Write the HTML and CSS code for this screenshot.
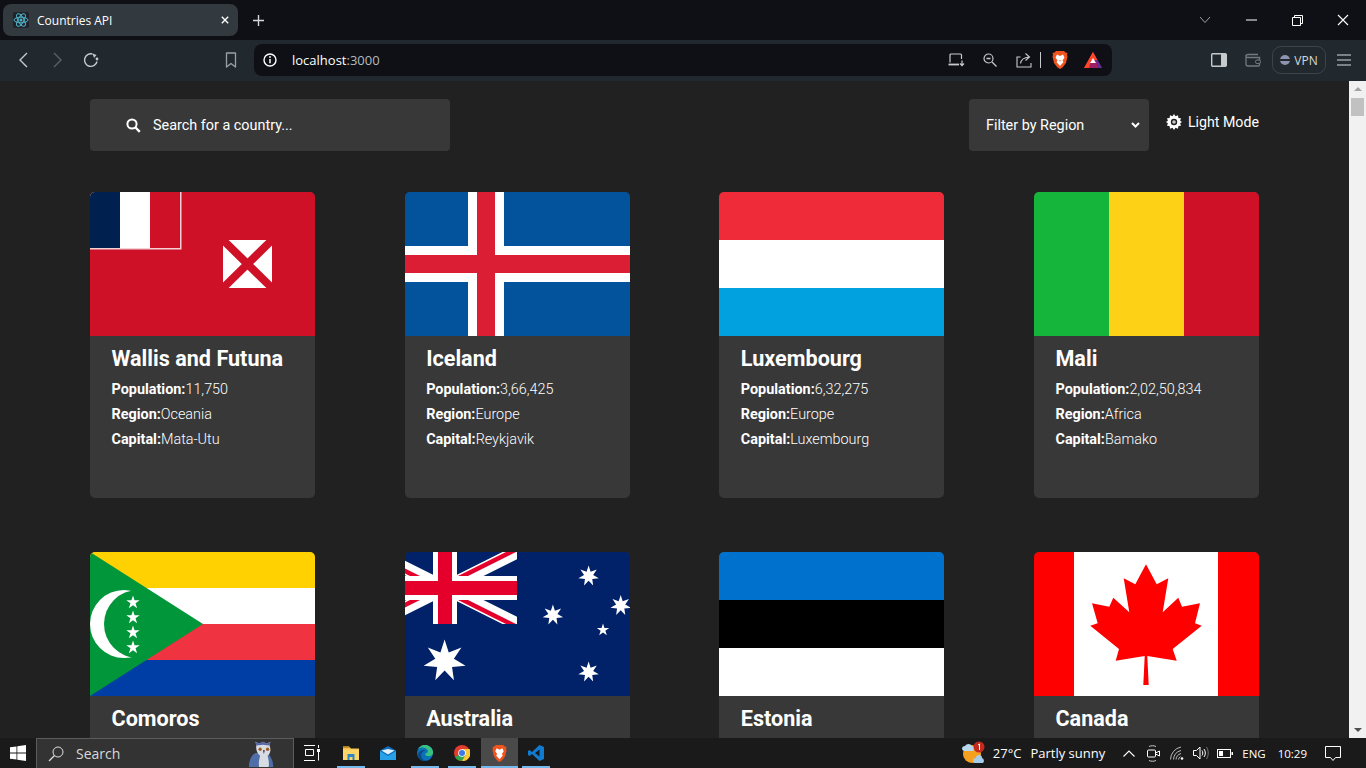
FILE: index.html
```html
<!DOCTYPE html>
<html lang="en">
  <head>
    <meta charset="UTF-8" />
    <meta name="viewport" content="width=device-width, initial-scale=1.0" />
    <title>Countries API</title>
    <link rel="stylesheet" href="styles.css">
  </head>
  <body>
    <!-- stars used by the comoros and australia flags -->
    <svg class="defs" width="0" height="0">
      <defs>
        <path id="star5" d="M0-1L.225-.309H.951L.363.118.588.809 0 .382-.588.809-.363.118-.951-.309H-.225z" fill="#fff"/>
        <path id="star7" d="M0-1L.193-.4.782-.623.433-.099.975.223.347.277.434.901 0 .444-.434.901-.347.277-.975.223-.433-.099-.782-.623-.193-.4z" fill="#fff"/>
        <clipPath id="canton"><rect width="112" height="72"/></clipPath>
      </defs>
    </svg>

    <!-- browser chrome -->
    <div class="tabstrip">
      <div class="tab">
        <svg class="favicon" viewBox="0 0 16 16">
          <rect width="16" height="16" rx="2" fill="#20232a"/>
          <g fill="none" stroke="#4fb3c8" stroke-width="1">
            <ellipse cx="8" cy="8" rx="7" ry="2.8"/>
            <ellipse cx="8" cy="8" rx="7" ry="2.8" transform="rotate(60 8 8)"/>
            <ellipse cx="8" cy="8" rx="7" ry="2.8" transform="rotate(120 8 8)"/>
          </g>
          <circle cx="8" cy="8" r="1.5" fill="#4fb3c8"/>
        </svg>
        <span class="tabTitle">Countries API</span>
        <svg class="tabClose" viewBox="0 0 10 10"><path d="M1 1l8 8M9 1l-8 8" stroke="#fff" stroke-width="1.7" fill="none"/></svg>
      </div>
      <svg class="newTab" viewBox="0 0 12 12"><path d="M6 0v12M0 6h12" stroke="#d5d8da" stroke-width="1.5" fill="none"/></svg>
      <div class="winControls">
        <span class="winBtn"><svg width="12" height="8" viewBox="0 0 12 8"><path d="M1 1l5 5.500L11 1" stroke="#9aa0a6" fill="none"/></svg></span>
        <span class="winBtn"><svg width="11" height="2" viewBox="0 0 11 2"><path d="M0 1h11" stroke="#fff" fill="none"/></svg></span>
        <span class="winBtn"><svg width="11" height="11" viewBox="0 0 11 11"><path d="M.5 2.500h8v8h-8zM2.500 2.500v-2h8v8h-2" stroke="#fff" fill="none"/></svg></span>
        <span class="winBtn"><svg width="12" height="12" viewBox="0 0 12 12"><path d="M1 1l10 10M11 1L1 11" stroke="#fff" stroke-width="1.100" fill="none"/></svg></span>
      </div>
    </div>

    <div class="toolbar">
      <span class="navBtn"><svg width="9" height="16" viewBox="0 0 9 16"><path d="M8 1L1 8l7 7" stroke="#c6cacd" stroke-width="1.400" fill="none"/></svg></span>
      <span class="navBtn"><svg width="9" height="16" viewBox="0 0 9 16"><path d="M1 1l7 7-7 7" stroke="#5b6166" stroke-width="1.400" fill="none"/></svg></span>
      <span class="navBtn"><svg width="16" height="16" viewBox="0 0 16 16"><path d="M14 9.500A6.300 6.300 0 1 1 9.500 2" stroke="#c6cacd" stroke-width="1.400" fill="none"/><path d="M9.500 1.500l4 1.500-2.500 3" fill="#c6cacd"/><circle cx="14" cy="7" r="1.400" fill="#c6cacd"/></svg></span>
      <span class="navBtn bookmark"><svg width="12" height="16" viewBox="0 0 12 16"><path d="M1.500 1h9v14L6 11.500 1.500 15z" stroke="#9aa0a6" stroke-width="1.300" fill="none" stroke-linejoin="round"/></svg></span>
      <div class="urlBar">
        <svg class="urlInfo" width="14" height="14" viewBox="0 0 14 14"><circle cx="7" cy="7" r="6" stroke="#fff" stroke-width="1.400" fill="none"/><path d="M7 6v4.200" stroke="#fff" stroke-width="1.500"/><circle cx="7" cy="4" r=".9" fill="#fff"/></svg>
        <span class="urlText">localhost<span class="urlPort">:3000</span></span>
        <div class="urlActions">
          <span class="urlBtn"><svg width="17" height="14" viewBox="0 0 17 14"><path d="M2 9.500V2a1 1 0 0 1 1-1h9.500a1 1 0 0 1 1 1v4" stroke="#c6cacd" stroke-width="1.200" fill="none"/><path d="M.5 11.500h10.500" stroke="#c6cacd" stroke-width="1.800" fill="none"/><path d="M14 7.500v5M12 10.500l2 2.200 2-2.200" stroke="#c6cacd" stroke-width="1.200" fill="none"/></svg></span>
          <span class="urlBtn"><svg width="14" height="14" viewBox="0 0 14 14"><circle cx="5.500" cy="5.500" r="4.500" stroke="#c6cacd" stroke-width="1.200" fill="none"/><path d="M3.500 5.500h4M9 9l4.500 4.500" stroke="#c6cacd" stroke-width="1.300" fill="none"/></svg></span>
          <span class="urlBtn"><svg width="16" height="16" viewBox="0 0 16 16"><path d="M4.500 5H1v10h14v-4" stroke="#c6cacd" stroke-width="1.100" fill="none"/><path d="M4.500 11.500c.5-4 3.500-6 8.500-6.500M9.500 1.500L13.500 5l-4 3.500" stroke="#c6cacd" stroke-width="1.100" fill="none"/></svg></span>
          <span class="urlSep"></span>
          <span class="urlBtn braveBtn"><svg width="16" height="18" viewBox="0 0 16 18"><path d="M4 0h8l1.500 1.500 2 .5-.5 2 .5 1.500L14 12l-3.500 4.500L8 18l-2.500-1.500L2 12 .5 5.500 1 4 .5 2l2-.5z" fill="#f1531f"/><path d="M8 5L5 3.500 3.500 6.500l2 3L4.500 11 8 15l3.500-4-1-1.500 2-3L11 3.500z" fill="#fff"/><path d="M8 10.500l-1.500-1h3z" fill="#f1531f"/></svg></span>
          <span class="urlBtn"><svg width="18" height="16" viewBox="0 0 18 16"><path d="M9 0l9 16H0z" fill="#9e1f63"/><path d="M9 0L0 16h5z" fill="#ff4724"/><path d="M9 0l9 16h-4z" fill="#662d91"/><path d="M9 0L4.800 8h8.400z" fill="#ff4724"/><path d="M9 6l3 5H6z" fill="#fff"/></svg></span>
        </div>
      </div>
      <div class="toolRight">
        <span class="navBtn"><svg width="16" height="14" viewBox="0 0 16 14"><rect x=".7" y=".7" width="14.600" height="12.600" rx="1" stroke="#c6cacd" stroke-width="1.400" fill="none"/><rect x="10" y="1" width="5" height="12" fill="#c6cacd"/></svg></span>
        <span class="navBtn"><svg width="16" height="14" viewBox="0 0 16 14"><path d="M1 3.500A2 2 0 0 1 3 1.500h10M1 3.500V11a2 2 0 0 0 2 2h10.500a1 1 0 0 0 1-1V4.500H3A2 2 0 0 1 1 3.500z" stroke="#727a80" stroke-width="1.300" fill="none"/><rect x="10.500" y="7" width="5" height="3.500" rx="1.500" stroke="#727a80" fill="#22292e"/></svg></span>
        <span class="vpn"><span class="vpnDot"></span>VPN</span>
        <span class="navBtn menuBtn"><svg width="14" height="12" viewBox="0 0 14 12"><path d="M0 1h14M0 6h14M0 11h14" stroke="#9aa0a6" stroke-width="1.300" fill="none"/></svg></span>
      </div>
    </div>

    <div class="viewport">
      <div class="page">
        <div class="header">
          <div class="search">
            <svg width="15" height="15" viewBox="0 0 15 15"><circle cx="6" cy="6" r="4.600" stroke="#fff" stroke-width="2" fill="none"/><path d="M9.500 9.500l4.300 4.300" stroke="#fff" stroke-width="2.400" fill="none"/></svg>
            <span>Search for a country...</span>
          </div>
          <div class="filter">
            <span>Filter by Region</span>
            <svg width="9" height="6" viewBox="0 0 9 6"><path d="M1 1l3.500 3.500L8 1" stroke="#fff" stroke-width="2" fill="none"/></svg>
          </div>
          <div class="themeToggle">
            <svg width="16" height="16" viewBox="0 0 16 16"><path d="M8 0l1.500 2.200L12 1.300l.4 2.600 2.600.4-.9 2.500L16 8l-1.900 1.200.9 2.500-2.600.4-.4 2.600-2.500-.9L8 16l-1.500-2.200-2.500.9-.4-2.600-2.600-.4.9-2.500L0 8l1.900-1.200L1 4.300l2.600-.4.400-2.600 2.500.9z" fill="#fff"/><circle cx="8" cy="8" r="3.200" fill="#212121"/><circle cx="8" cy="8" r="1.800" fill="#c8c8c8"/></svg>
            <span>Light Mode</span>
          </div>
        </div>

        <div class="countries">
          <div class="card">
            <svg class="flag" viewBox="0 0 225 144">
              <rect width="225" height="144" fill="#ce1126"/>
              <rect width="91.500" height="57.500" fill="#f5d0d5"/>
              <rect width="30" height="56" fill="#00214f"/>
              <rect x="30" width="30" height="56" fill="#fff"/>
              <rect x="60" width="30" height="56" fill="#ce1126"/>
              <rect x="133" y="48" width="49" height="48" fill="#fff"/>
              <path d="M133 48l49 48M182 48l-49 48" stroke="#ce1126" stroke-width="8" fill="none"/>
            </svg>
            <div class="cardBody">
              <h2>Wallis and Futuna</h2>
              <p><b>Population:</b>11,750</p>
              <p><b>Region:</b>Oceania</p>
              <p><b>Capital:</b>Mata-Utu</p>
            </div>
          </div>

          <div class="card">
            <svg class="flag" viewBox="0 0 225 144">
              <rect width="225" height="144" fill="#02529c"/>
              <path d="M63 0h36v54h126v36H99v54H63V90H0V54h63z" fill="#fff"/>
              <path d="M72 0h18v63h135v18H90v63H72V81H0V63h72z" fill="#dc1e35"/>
            </svg>
            <div class="cardBody">
              <h2>Iceland</h2>
              <p><b>Population:</b>3,66,425</p>
              <p><b>Region:</b>Europe</p>
              <p><b>Capital:</b>Reykjavik</p>
            </div>
          </div>

          <div class="card">
            <svg class="flag" viewBox="0 0 225 144">
              <rect width="225" height="48" fill="#ef2b3a"/>
              <rect y="48" width="225" height="48" fill="#fff"/>
              <rect y="96" width="225" height="48" fill="#00a1de"/>
            </svg>
            <div class="cardBody">
              <h2>Luxembourg</h2>
              <p><b>Population:</b>6,32,275</p>
              <p><b>Region:</b>Europe</p>
              <p><b>Capital:</b>Luxembourg</p>
            </div>
          </div>

          <div class="card">
            <svg class="flag" viewBox="0 0 225 144">
              <rect width="75" height="144" fill="#14b53a"/>
              <rect x="75" width="75" height="144" fill="#fcd116"/>
              <rect x="150" width="75" height="144" fill="#ce1126"/>
            </svg>
            <div class="cardBody">
              <h2>Mali</h2>
              <p><b>Population:</b>2,02,50,834</p>
              <p><b>Region:</b>Africa</p>
              <p><b>Capital:</b>Bamako</p>
            </div>
          </div>

          <div class="card">
            <svg class="flag" viewBox="0 0 225 144">
              <rect width="225" height="36" fill="#ffd100"/>
              <rect y="36" width="225" height="36" fill="#fff"/>
              <rect y="72" width="225" height="36" fill="#ef3340"/>
              <rect y="108" width="225" height="36" fill="#003da5"/>
              <path d="M0 0l113 72L0 144z" fill="#009639"/>
              <circle cx="34" cy="72" r="34" fill="#fff"/>
              <circle cx="48" cy="72" r="34" fill="#009639"/>
              <use href="#star5" transform="translate(43 50.500) scale(7)"/>
              <use href="#star5" transform="translate(43 65.500) scale(7)"/>
              <use href="#star5" transform="translate(43 80.500) scale(7)"/>
              <use href="#star5" transform="translate(43 95.500) scale(7)"/>
            </svg>
            <div class="cardBody">
              <h2>Comoros</h2>
            </div>
          </div>

          <div class="card">
            <svg class="flag" viewBox="0 0 225 144">
              <rect width="225" height="144" fill="#012169"/>
              <g clip-path="url(#canton)">
                <path d="M-32 0L112 72M112 0L-32 72" stroke="#fff" stroke-width="13"/>
                <path d="M-32 3L40 39M40 33L112-3M40 39L112 75M40 33L-32 69" stroke="#e4002b" stroke-width="4.500"/>
                <path d="M0 24h112v24H0zM28 0h24v72H28z" fill="#fff"/>
                <path d="M0 29h112v14H0zM33 0h14v72H33z" fill="#e4002b"/>
              </g>
              <use href="#star7" transform="translate(39.600 109) scale(21.500)"/>
              <use href="#star7" transform="translate(183.600 24) scale(10.500)"/>
              <use href="#star7" transform="translate(215.700 53.500) scale(10.500)"/>
              <use href="#star7" transform="translate(147.900 63) scale(10.500)"/>
              <use href="#star7" transform="translate(183.600 120) scale(10.500)"/>
              <use href="#star5" transform="translate(198 78) scale(6.500)"/>
            </svg>
            <div class="cardBody">
              <h2>Australia</h2>
            </div>
          </div>

          <div class="card">
            <svg class="flag" viewBox="0 0 225 144">
              <rect width="225" height="48" fill="#0072ce"/>
              <rect y="48" width="225" height="48" fill="#000"/>
              <rect y="96" width="225" height="48" fill="#fff"/>
            </svg>
            <div class="cardBody">
              <h2>Estonia</h2>
            </div>
          </div>

          <div class="card">
            <svg class="flag" viewBox="0 0 225 144">
              <rect width="225" height="144" fill="#f00"/>
              <rect x="40" width="144" height="144" fill="#fff"/>
              <path d="M112 12.300L122.700 32.300 134.300 26.300 128.700 60.300 144.300 45.700 148 54.700 166 51.300 161 71.300 167.700 73.700 138.700 97 142.700 108.700 113.300 104 114.700 133H109.300L110.700 104 81.700 108.700 85 97 56.300 73.700 63.700 71.300 58 51.300 75.300 54.700 79.300 45.700 95.300 60.300 89.700 26.300 101.300 32.300z" fill="#f00"/>
            </svg>
            <div class="cardBody">
              <h2>Canada</h2>
            </div>
          </div>
        </div>
      </div>
      <div class="scrollbar">
        <div class="scrollUp"></div>
        <div class="scrollThumb"></div>
        <div class="scrollDown"></div>
      </div>
    </div>

    <!-- windows taskbar -->
    <div class="taskbar">
      <span class="startBtn"><svg width="16" height="16" viewBox="0 0 16 16"><path d="M0 2.300l6.500-.9v6.200H0zM7.300 1.300L16 0v7.600H7.300zM0 8.400h6.500v6.200L0 13.700zM7.300 8.400H16V16l-8.700-1.300z" fill="#fff"/></svg></span>
      <div class="taskSearch">
        <svg width="16" height="16" viewBox="0 0 16 16"><circle cx="10" cy="6" r="5" stroke="#e0e0e0" fill="none"/><path d="M6.500 9.500L1 15" stroke="#e0e0e0" stroke-width="1.200" fill="none"/></svg>
        <span>Search</span>
        <svg class="owl" width="28" height="29" viewBox="0 0 30 29">
          <path d="M1 29c0-8 3-13 7-15l12 0c4 2 7 8 7 15z" fill="#4f6ea8"/>
          <path d="M9 6L8 2l4 2 4-2 4 2 4-2-1 4c2 4 1 9-2 11 1 4 2 8 1 12H12c-1-4 0-8 1-12-3-2-5-7-4-11z" fill="#d9dbe3"/>
          <path d="M8 2l4 2 4-2 4 2 4-2-1 4-7-1-7 1z" fill="#5566a8"/>
          <circle cx="13" cy="10" r="1.800" fill="#a35a20"/>
          <circle cx="21" cy="10" r="1.800" fill="#a35a20"/>
          <path d="M16 11h2l-1 4z" fill="#2c2c38"/>
        </svg>
      </div>
      <span class="taskView"><svg width="16" height="16" viewBox="0 0 16 16"><path d="M0 .5h11M0 15.500h11M1.500 4.500h8v6h-8zM14.500 0v3M14.500 6.500v9" stroke="#fff" fill="none"/><rect x="13" y="4" width="3" height="3" fill="#fff"/></svg></span>
      <div class="taskApps">
        <span class="app open"><svg width="16" height="16" viewBox="0 0 16 16"><path d="M0 1.500h6l2 2h8V15H0z" fill="#f2c14e"/><path d="M0 1.500h6l1 1.500H0z" fill="#c98e1c"/><path d="M0 4.500h16V15H0z" fill="#ffd767"/><path d="M4.500 9h7v6h-2v-3h-3v3h-2z" fill="#2f86c6"/></svg></span>
        <span class="app"><svg width="16" height="14" viewBox="0 0 16 14"><path d="M0 4.500L8 0l8 4.500V14H0z" fill="#0f6cbd"/><path d="M0 5l8 5 8-5v9H0z" fill="#27a2e8"/><path d="M1.500 4.500L8 8.500l6.500-4L8 3z" fill="#dff1fb"/></svg></span>
        <span class="app open"><svg width="16" height="16" viewBox="0 0 16 16"><circle cx="8" cy="8" r="8" fill="#0c72b8"/><path d="M16 8.500A8 8 0 0 0 1 4c3-2.500 8-2 9.500 1 1 2-.5 3.500-2 3.500-.8 0-.5 2 2 2.500 2.500.5 5-.5 5.500-2.500z" fill="#39c27f"/><path d="M5 13c-2-3 0-7 3.500-7.500C5 4 1 6.500 1 10c0 3 3 6 7 6 1 0 2-.2 3-.6-2.500.6-5-.4-6-2.400z" fill="#0a4c8a"/></svg></span>
        <span class="app open"><svg width="16" height="16" viewBox="0 0 16 16"><circle cx="8" cy="8" r="8" fill="#e33b2e"/><path d="M8 8L1 12a8 8 0 0 0 7 4l3.500-6z" fill="#2ea44f"/><path d="M8 4h7.500A8 8 0 0 1 8 16l3.500-6z" fill="#fcc934"/><circle cx="8" cy="8" r="3.800" fill="#fff"/><circle cx="8" cy="8" r="3" fill="#3b78e7"/></svg></span>
        <span class="app current"><svg width="15" height="17" viewBox="0 0 16 18"><path d="M4 0h8l1.500 1.500 2 .5-.5 2 .5 1.500L14 12l-3.500 4.500L8 18l-2.500-1.500L2 12 .5 5.500 1 4 .5 2l2-.5z" fill="#f1531f"/><path d="M8 5L5 3.500 3.500 6.500l2 3L4.500 11 8 15l3.500-4-1-1.500 2-3L11 3.500z" fill="#fff"/></svg></span>
        <span class="app open"><svg width="16" height="16" viewBox="0 0 16 16"><path d="M11.500 0L16 2v12l-4.500 2L4 9l-2.500 2L0 10V6l1.500-1L4 7zM11.500 4.500L7 8l4.500 3.500z" fill="#0f7bd1"/></svg></span>
      </div>
      <div class="tray">
        <span class="weather">
          <svg width="26" height="24" viewBox="0 0 26 24"><circle cx="11" cy="13" r="9" fill="#f6a021"/><path d="M1 8a3 3 0 0 1 3-3 4 4 0 0 1 7 0 3 3 0 0 1 1 5H3a3 3 0 0 1-2-2z" fill="#b8d8ef"/><path d="M12 20a3 3 0 0 1 3-3 3 3 0 0 1 6 0 3 3 0 0 1 1 5h-9a3 3 0 0 1-1-2z" fill="#a8cdea"/><circle cx="18" cy="6" r="5.500" fill="#c42b1c"/><path d="M17 4l1.500-1v6" stroke="#fff" fill="none"/></svg>
        </span>
        <span class="trayTemp">27°C</span>
        <span class="trayText">Partly sunny</span>
        <span class="trayIcon chev"><svg width="12" height="7" viewBox="0 0 12 7"><path d="M.5 6.500L6 1l5.500 5.500" stroke="#fff" stroke-width="1.100" fill="none"/></svg></span>
        <span class="trayIcon"><svg width="13" height="17" viewBox="0 0 13 17"><path d="M2 1.500c2-1 5-1 7 0M2 15.500c2 1 5 1 7 0" stroke="#ccc" fill="none"/><rect x=".5" y="5" width="8" height="7" rx="1" stroke="#fff" fill="none"/><path d="M8.500 8l4-2v5l-4-2" stroke="#fff" fill="none"/></svg></span>
        <span class="trayIcon"><svg width="14" height="14" viewBox="0 0 14 14"><path d="M.5 13.500A13 13 0 0 1 11 1M3.500 13.500A10 10 0 0 1 11 4.500M6 13.500A7 7 0 0 1 11 7.500M8.500 13.500a4 4 0 0 1 2-3" stroke="#bbb" fill="none"/><circle cx="12" cy="12.500" r="1.300" fill="#fff"/></svg></span>
        <span class="trayIcon"><svg width="16" height="14" viewBox="0 0 16 14"><path d="M.5 4.500h3L7 1v12L3.500 9.500h-3z" stroke="#fff" fill="none"/><path d="M9 4.500c1 1.500 1 3.500 0 5M11 3c1.800 2.500 1.800 5.500 0 8" stroke="#fff" fill="none"/><path d="M13.500 1c2.300 3.500 2.300 8.500 0 12" stroke="#777" fill="none"/></svg></span>
        <span class="trayIcon"><svg width="16" height="9" viewBox="0 0 16 9"><rect x=".5" y=".5" width="13" height="8" stroke="#fff" fill="none"/><rect x="2" y="2" width="4" height="5" fill="#fff"/><rect x="14.500" y="3" width="1.500" height="3" fill="#fff"/></svg></span>
        <span class="trayLang">ENG</span>
        <span class="trayTime">10:29</span>
        <span class="trayIcon notify"><svg width="16" height="15" viewBox="0 0 16 15"><path d="M.5.500h15v11h-5L8 14.500 5.500 11.500h-5z" stroke="#fff" fill="none"/></svg></span>
      </div>
    </div>
  </body>
</html>
```

FILE: styles.css
```css
* {
  margin: 0;
  padding: 0;
  box-sizing: border-box;
}

html,
body {
  height: 768px;
  overflow: hidden;
}

body {
  display: flex;
  flex-direction: column;
  background-color: #212121;
  color: #fff;
  font-family: Roboto, "Liberation Sans", sans-serif;
}

.defs {
  display: block;
  flex: 0 0 0;
}

/* tabs row */
.tabstrip {
  flex: 0 0 40px;
  display: flex;
  align-items: center;
  padding-left: 3px;
  background-color: #0e1015;
}

.tab {
  width: 235px;
  height: 32px;
  display: flex;
  align-items: center;
  padding: 0 9px 0 10px;
  border-radius: 8px;
  background-color: #32393f;
  font-family: "Open Sans", sans-serif;
  font-size: 12px;
}

.favicon {
  width: 16px;
  height: 16px;
  margin-right: 8px;
}

.tabTitle {
  flex: 1;
}

.tabClose {
  width: 8px;
  height: 8px;
}

.newTab {
  width: 11px;
  height: 11px;
  margin-left: 15px;
}

.winControls {
  display: flex;
  margin-left: auto;
}

.winBtn {
  width: 46px;
  height: 40px;
  display: flex;
  align-items: center;
  justify-content: center;
}

/* address bar row */
.toolbar {
  flex: 0 0 41px;
  display: flex;
  align-items: center;
  padding: 0 5px 1px 6px;
  background-color: #22292e;
}

.navBtn {
  width: 34px;
  height: 32px;
  display: flex;
  align-items: center;
  justify-content: center;
}

.bookmark {
  margin-left: 106px;
  margin-right: 6px;
}

.urlBar {
  width: 858px;
  height: 32px;
  display: flex;
  align-items: center;
  padding-left: 9px;
  border-radius: 8px;
  background-color: #0e1015;
  font-family: "Open Sans", sans-serif;
  font-size: 13px;
}

.urlInfo {
  margin-right: 15px;
}

.urlPort {
  color: #b5babe;
}

.urlActions {
  display: flex;
  align-items: center;
  margin-left: auto;
  padding-right: 2px;
}

.urlBtn {
  width: 34px;
  display: flex;
  justify-content: center;
}

.urlSep {
  width: 1px;
  height: 16px;
  margin: 0 3px 0 -1px;
  background-color: #c6cacd;
}

.braveBtn {
  width: 32px;
}

.toolRight {
  display: flex;
  align-items: center;
  margin-left: auto;
}

.vpn {
  width: 54px;
  height: 28px;
  display: flex;
  align-items: center;
  justify-content: center;
  margin-left: 2px;
  border: 1px solid #3c444a;
  border-radius: 9px;
  color: #d5d8da;
  font-family: "Open Sans", sans-serif;
  font-size: 12px;
}

.vpnDot {
  width: 10px;
  height: 10px;
  margin-right: 4px;
  border-radius: 50%;
  background: linear-gradient(#8d93b0 40%, #22292e 40%, #22292e 60%, #8d93b0 60%);
}

.menuBtn {
  margin-left: 1px;
}

/* the page itself */
.viewport {
  flex: 1;
  display: flex;
  min-height: 0;
}

.page {
  flex: 1;
  padding: 18px 90px 0;
  overflow: hidden;
  background-color: #212121;
}

.header {
  display: flex;
  align-items: flex-start;
  margin-bottom: 41px;
}

.search {
  width: 360px;
  height: 52px;
  display: flex;
  align-items: center;
  padding-left: 36px;
  border-radius: 4px;
  background-color: #383838;
  font-size: 14.4px;
}

.search svg {
  margin-right: 12px;
}

.filter {
  width: 180px;
  height: 52px;
  display: flex;
  align-items: center;
  justify-content: space-between;
  margin-left: auto;
  padding: 0 9px 0 17px;
  border-radius: 4px;
  background-color: #383838;
  font-size: 14.4px;
}

.themeToggle {
  display: flex;
  align-items: center;
  margin: 15px 0 0 17px;
  font-size: 14.2px;
}

.themeToggle svg {
  margin-right: 6px;
}

.countries {
  display: grid;
  grid-template-columns: repeat(4, 225px);
  justify-content: space-between;
  row-gap: 54px;
}

.card {
  height: 306px;
  border-radius: 5px;
  overflow: hidden;
  background-color: #383838;
}

.flag {
  display: block;
  width: 225px;
  height: 144px;
}

.cardBody {
  padding: 9px 21.5px;
}

.cardBody h2 {
  margin-bottom: 4px;
  font-size: 21.6px;
  line-height: 28px;
  font-weight: 700;
}

.cardBody p {
  font-size: 14.4px;
  font-weight: 300;
  line-height: 25px;
}

.cardBody b {
  font-weight: 700;
}

/* scrollbar */
.scrollbar {
  flex: 0 0 17px;
  display: flex;
  flex-direction: column;
  align-items: center;
  background-color: #f1f1f1;
}

.scrollUp {
  margin-top: 6px;
  border-left: 4px solid transparent;
  border-right: 4px solid transparent;
  border-bottom: 4px solid #a3a3a3;
}

.scrollThumb {
  width: 13px;
  height: 18px;
  margin-top: 7px;
  background-color: #c1c1c1;
}

.scrollDown {
  margin-top: auto;
  margin-bottom: 6px;
  border-left: 4px solid transparent;
  border-right: 4px solid transparent;
  border-top: 4px solid #505050;
}

/* taskbar */
.taskbar {
  flex: 0 0 30px;
  display: flex;
  align-items: center;
  background-color: #1a1a1a;
  font-family: "Open Sans", sans-serif;
  font-size: 13px;
}

.startBtn {
  width: 36px;
  display: flex;
  justify-content: center;
}

.taskSearch {
  position: relative;
  width: 258px;
  height: 30px;
  display: flex;
  align-items: center;
  padding-left: 11px;
  border: 1px solid #5c5c5c;
  border-bottom: none;
  background-color: #333;
  color: #d8d8d8;
  font-size: 14px;
}

.taskSearch span {
  margin-left: 12px;
}

.owl {
  position: absolute;
  right: 17px;
  bottom: 0;
}

.taskView {
  width: 36px;
  display: flex;
  justify-content: center;
}

.taskApps {
  display: flex;
  margin-left: 2.5px;
}

.app {
  position: relative;
  width: 37px;
  height: 30px;
  display: flex;
  align-items: center;
  justify-content: center;
}

.app.open::after,
.app.current::after {
  content: "";
  position: absolute;
  left: 4px;
  right: 5px;
  bottom: 0;
  height: 2px;
  background-color: #76b9ed;
}

.app.current {
  background-color: #4a4a4a;
}

.app.current::after {
  left: 0;
  right: 0;
}

.tray {
  display: flex;
  align-items: center;
  margin-left: auto;
}

.weather {
  display: flex;
  margin-right: 6px;
}

.trayTemp {
  margin-right: 9px;
}

.trayIcon {
  display: flex;
  justify-content: center;
  width: 24px;
}

.chev {
  margin-left: 12px;
}

.trayLang {
  margin-left: 5px;
  font-size: 11.5px;
}

.trayTime {
  margin-left: 12px;
  font-size: 11.5px;
}

.notify {
  width: 16px;
  margin: 0 25px 0 18px;
}
```
